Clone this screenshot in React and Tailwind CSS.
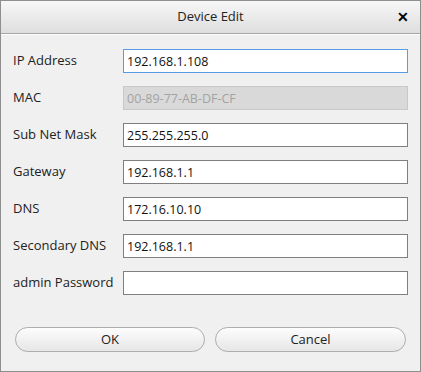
import React from "react";

const fields = [
  { label: "IP Address", value: "192.168.1.108", focus: true },
  { label: "MAC", value: "00-89-77-AB-DF-CF", disabled: true },
  { label: "Sub Net Mask", value: "255.255.255.0" },
  { label: "Gateway", value: "192.168.1.1" },
  { label: "DNS", value: "172.16.10.10" },
  { label: "Secondary DNS", value: "192.168.1.1" },
  { label: "admin Password", value: "", password: true },
];

const Field = ({ label, value, focus, disabled, password }) => {
  let box = "border-[#7f7f7f] bg-white text-[#111]";
  if (focus) box = "border-[#569de5] bg-white text-[#111]";
  if (disabled) box = "border-[#c8c8c8] bg-[#d9d9d9] text-[#a3a3a3]";
  return (
    <div className="flex items-center h-6">
      <label className="w-[110px] shrink-0 text-[13px] text-[#222]">{label}</label>
      <input
        type={password ? "password" : "text"}
        defaultValue={value}
        disabled={disabled}
        className={`w-[285px] h-6 px-[3px] border outline-none text-[12.5px] ${box}`}
      />
    </div>
  );
};

export default function App() {
  return (
    <div
      className="w-[421px] h-[372px] flex flex-col bg-[#f0f0f0] border border-[#8e8e8e] text-[12.5px]"
      style={{ fontFamily: '"Open Sans", "Noto Sans", sans-serif' }}
    >
      <div className="h-[33px] shrink-0 relative flex items-center justify-center bg-gradient-to-b from-[#f7f7f7] to-[#dedede] border-b border-[#a5a5a5]">
        <span className="text-[13px] text-[#222]">Device Edit</span>
        <button className="absolute right-[11px] top-[9px] text-[14px] font-bold leading-none text-black">
          ✕
        </button>
      </div>
      <div className="border-t border-white flex-1 flex flex-col pl-3 pt-[14px]">
        <div className="flex flex-col gap-[13px]">
          {fields.map((f) => (
            <Field key={f.label} {...f} />
          ))}
        </div>
        <div className="flex gap-[10px] mt-[32px] pl-[2px]">
          <button className="w-[190px] h-[25px] rounded-full border border-[#adadad] bg-gradient-to-b from-[#fdfdfd] to-[#e6e6e6] text-[13px] text-[#222]">
            OK
          </button>
          <button className="w-[191px] h-[25px] rounded-full border border-[#adadad] bg-gradient-to-b from-[#fdfdfd] to-[#e6e6e6] text-[13px] text-[#222]">
            Cancel
          </button>
        </div>
      </div>
    </div>
  );
}
